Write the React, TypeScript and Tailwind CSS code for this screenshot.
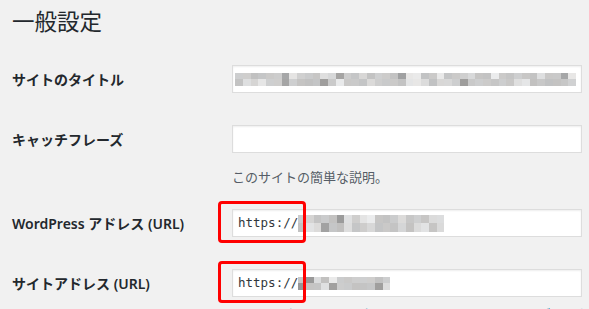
import type { ReactNode } from "react";

const sans = "font-['Noto_Sans','Noto_Sans_CJK_JP',sans-serif]";

// Deterministic grey mosaic for the blurred-out values.
function greys(seed: number, count: number) {
  let s = seed;
  const out: string[] = [];
  for (let i = 0; i < count; i++) {
    s = (s * 9301 + 49297) % 233280;
    const r = s / 233280;
    let v = 0;
    if (r < 0.1) v = 150 + Math.round(r * 200);
    else if (r < 0.6) v = 190 + Math.round(r * 30);
    else v = 212 + Math.round((r - 0.6) * 60);
    const tint = (s % 3) - 1;
    out.push(`rgb(${v},${v + tint},${v + tint * 2})`);
  }
  return out;
}

function Mosaic({ seed, cols, blockW, blockH }: { seed: number; cols: number; blockW: number; blockH: number }) {
  const top = greys(seed, cols);
  const bottom = greys(seed + 17, cols);
  return (
    <div className="flex flex-col">
      {[top, bottom].map((row, ri) => (
        <div key={ri} className="flex">
          {row.map((c, i) => (
            <div key={i} style={{ backgroundColor: c, width: blockW, height: blockH }} />
          ))}
        </div>
      ))}
    </div>
  );
}

function Field({ children }: { children?: ReactNode }) {
  return (
    <div className="relative flex h-[28px] w-[350px] items-center border border-[#dddddd] bg-white shadow-[inset_0_1px_2px_rgba(0,0,0,0.07)]">
      {children}
    </div>
  );
}

function Row({ label, children }: { label: string; children: ReactNode }) {
  return (
    <div className="flex">
      <div className="flex h-[28px] w-[220px] shrink-0 items-center text-[14px] font-semibold text-[#23282d]">
        {label}
      </div>
      <div className="flex flex-col">{children}</div>
    </div>
  );
}

function UrlValue({ seed, cols, blockH }: { seed: number; cols: number; blockH: number }) {
  return (
    <>
      <span className="pl-[5px] font-['DejaVu_Sans_Mono',monospace] text-[12.5px] text-[#32373c]">https://</span>
      <Mosaic seed={seed} cols={cols} blockW={7.7} blockH={blockH} />
      <div className="pointer-events-none absolute -top-[9px] -left-[15px] h-[42px] w-[88px] rounded-[4px] border-[3px] border-[#ff0000]" />
    </>
  );
}

export default function App() {
  return (
    <div className={`min-h-[309px] overflow-hidden bg-[#f1f1f1] pl-3 ${sans}`}>
      <h1 className="h-[65px] pt-[6px] text-[22.5px] leading-[32px] font-normal text-[#23282d]">一般設定</h1>

      <Row label="サイトのタイトル">
        <Field>
          <div className="pl-[2px]">
            <Mosaic seed={7} cols={44} blockW={7.75} blockH={6.5} />
          </div>
        </Field>
      </Row>

      <div className="mt-[32px]">
        <Row label="キャッチフレーズ">
          <Field />
          <p className="mt-[15px] text-[13px] leading-[18px] text-[#555d66]">このサイトの簡単な説明。</p>
        </Row>
      </div>

      <div className="mt-[23px]">
        <Row label="WordPress アドレス (URL)">
          <Field>
            <UrlValue seed={31} cols={19} blockH={8.5} />
          </Field>
        </Row>
      </div>

      <div className="mt-[32px]">
        <Row label="サイトアドレス (URL)">
          <Field>
            <UrlValue seed={53} cols={12} blockH={6.5} />
          </Field>
          <p className="mt-[8px] whitespace-nowrap text-[13px] leading-[18px] text-[#0073aa]">
            サイトのホームページを WordPress のインストールディレクトリとは異なる場所にしたい場合は
          </p>
        </Row>
      </div>
    </div>
  );
}
